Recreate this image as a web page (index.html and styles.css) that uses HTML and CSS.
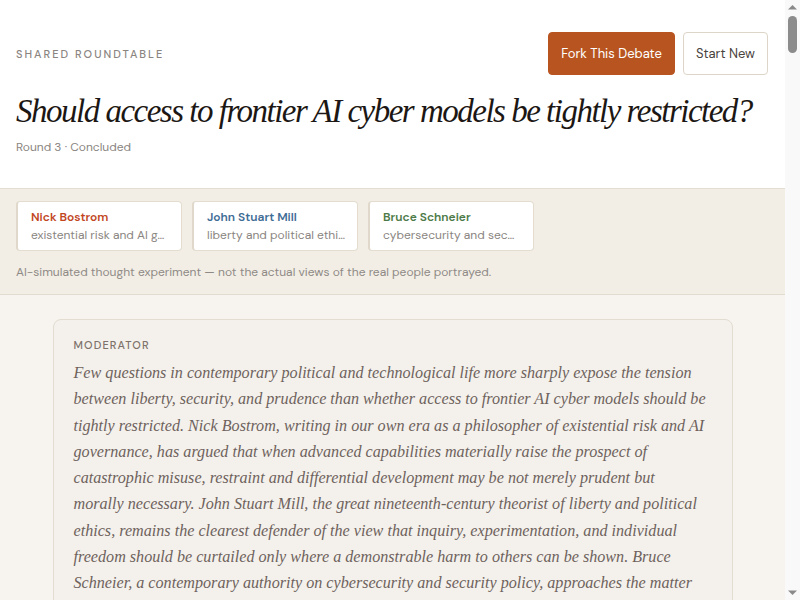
FILE: index.html
```html
<!DOCTYPE html>
<html lang="en">
<head>
<meta charset="utf-8">
<title>Shared Roundtable</title>
<link rel="stylesheet" href="styles.css">
</head>
<body>
<div class="page">
<header class="top">
  <div class="top-row">
    <div class="eyebrow">SHARED ROUNDTABLE</div>
    <div class="actions">
      <button class="btn btn-primary">Fork This Debate</button>
      <button class="btn btn-ghost">Start New</button>
    </div>
  </div>
  <h1 class="title">Should access to frontier AI cyber models be tightly restricted?</h1>
  <div class="meta">Round 3 · Concluded</div>
</header>
<section class="cast">
  <div class="cards">
    <div class="card">
      <div class="name name-red">Nick Bostrom</div>
      <div class="desc">existential risk and AI governance</div>
    </div>
    <div class="card">
      <div class="name name-blue">John Stuart Mill</div>
      <div class="desc">liberty and political ethics</div>
    </div>
    <div class="card">
      <div class="name name-green">Bruce Schneier</div>
      <div class="desc">cybersecurity and security policy</div>
    </div>
  </div>
  <p class="disclaimer">AI-simulated thought experiment — not the actual views of the real people portrayed.</p>
</section>
<main class="thread">
  <article class="moderator">
    <div class="mod-label">MODERATOR</div>
    <p class="mod-text">Few questions in contemporary political and technological life more sharply expose the tension between liberty, security, and prudence than whether access to frontier AI cyber models should be tightly restricted. Nick Bostrom, writing in our own era as a philosopher of existential risk and AI governance, has argued that when advanced capabilities materially raise the prospect of catastrophic misuse, restraint and differential development may be not merely prudent but morally necessary. John Stuart Mill, the great nineteenth-century theorist of liberty and political ethics, remains the clearest defender of the view that inquiry, experimentation, and individual freedom should be curtailed only where a demonstrable harm to others can be shown. Bruce Schneier, a contemporary authority on cybersecurity and security policy, approaches the matter from the standpoint of practical defense, asking what restrictions would actually accomplish against determined adversaries.</p>
  </article>
</main>
</div>
<div class="scrollbar" aria-hidden="true">
  <svg class="sb-arrow" width="15" height="15" viewBox="0 0 15 15"><path d="M3 9.5h9L7.5 5z" fill="#8a8a8a"/></svg>
  <div class="sb-thumb"></div>
  <div class="sb-track"></div>
  <svg class="sb-arrow" width="15" height="15" viewBox="0 0 15 15"><path d="M3 5.5h9L7.5 10z" fill="#8a8a8a"/></svg>
</div>
</body>
</html>
```

FILE: styles.css
```css
* { box-sizing: border-box; }
html, body { margin: 0; padding: 0; height: 100%; }
body {
  display: flex;
  background: #f7f4ef;
  font-family: "DM Sans", Inter, "Liberation Sans", sans-serif;
  color: #2a2420;
  overflow: hidden;
}
.page {
  flex: 1;
  min-width: 0;
  height: 100vh;
  overflow: hidden;
  background: #f7f4ef;
}
.scrollbar {
  width: 15px;
  flex: none;
  height: 100vh;
  background: #f9f9f9;
  display: flex;
  flex-direction: column;
  align-items: center;
}
.sb-arrow { display: block; flex: none; }
.sb-thumb {
  width: 9px;
  height: 37px;
  margin-top: 1px;
  border-radius: 5px;
  background: #8c8c8c;
  flex: none;
}
.sb-track { flex: 1; }
.top {
  background: #ffffff;
  padding: 32px 17px 33px 16px;
  border-bottom: 1px solid #e4ddd2;
}
.top-row {
  display: flex;
  align-items: center;
  justify-content: space-between;
}
.eyebrow {
  font-size: 11px;
  letter-spacing: 2px;
  color: #8a8581;
  font-weight: 500;
}
.actions { display: flex; gap: 8px; }
.btn {
  font-family: inherit;
  font-size: 13px;
  height: 43px;
  padding: 0 12px;
  border-radius: 4px;
  cursor: pointer;
}
.btn-primary {
  background: #b85420;
  color: #fff;
  border: 1px solid #b85420;
}
.btn-ghost {
  background: #fff;
  color: #4a4440;
  border: 1px solid #ddd5c8;
}
.title {
  margin: 16px 0 0;
  font-family: "Liberation Serif", "Times New Roman", serif;
  font-style: italic;
  font-weight: 400;
  font-size: 33px;
  letter-spacing: -1.5px;
  line-height: 40px;
  color: #1c1714;
  white-space: nowrap;
}
.meta {
  margin-top: 9px;
  font-size: 12px;
  line-height: 15px;
  color: #8a8581;
}
.cast {
  background: #f2eee6;
  padding: 12px 16px 14px;
  border-bottom: 1px solid #e2dbcf;
}
.cards { display: flex; gap: 10px; }
.card {
  width: 166px;
  background: #fff;
  border: 1px solid #e3dccf;
  border-left: 2px solid #e0d8ca;
  border-radius: 4px;
  padding: 6px 12px 6px 13px;
}
.name {
  font-size: 12px;
  font-weight: 600;
  line-height: 18px;
}
.name-red { color: #c2471f; }
.name-blue { color: #3f6d96; }
.name-green { color: #4d7a48; }
.desc {
  font-size: 12px;
  line-height: 18px;
  color: #8a8581;
  white-space: nowrap;
  overflow: hidden;
  text-overflow: ellipsis;
}
.disclaimer {
  margin: 14px 0 0;
  font-size: 12px;
  line-height: 15px;
  color: #8f8a85;
}
.thread {
  padding: 24px 0 40px;
}
.moderator {
  max-width: 680px;
  margin: 0 auto;
  background: #f4f1ec;
  border: 1px solid #e2dcd1;
  border-radius: 8px;
  padding: 18px 23px 20px 20px;
}
.mod-label {
  font-size: 11px;
  letter-spacing: 1.1px;
  color: #7d716a;
  font-weight: 500;
}
.mod-text {
  margin: 8px 0 0;
  font-family: "Liberation Serif", "Times New Roman", serif;
  font-style: italic;
  font-size: 16.15px;
  line-height: 26.3px;
  color: #6e625c;
}
```
